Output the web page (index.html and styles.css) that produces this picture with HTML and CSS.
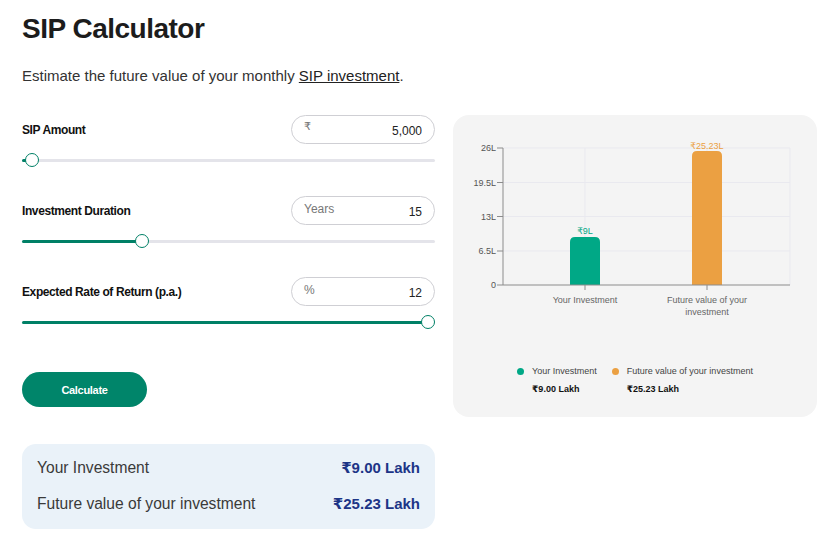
FILE: index.html
```html
<!DOCTYPE html>
<html lang="en">

<head>
    <meta charset="UTF-8">
    <meta name="viewport" content="width=device-width, initial-scale=1.0">
    <title>SIP Calculator</title>
    <link rel="stylesheet" href="styles.css">
</head>

<body>

    <h1 class="page-title">SIP Calculator</h1>
    <p class="page-intro">Estimate the future value of your monthly <a href="#">SIP investment</a>.</p>

    <div class="calc-layout">

        <!-- Inputs -->
        <div class="calc-form">
            <div class="field">
                <div class="field-head">
                    <label for="amount">SIP Amount</label>
                    <div class="input-box">
                        <span class="unit unit-rupee">₹</span>
                        <input type="text" id="amount" value="5,000" readonly>
                    </div>
                </div>
                <div class="slider">
                    <div class="slider-fill" style="width: 10px;"></div>
                    <div class="slider-thumb" style="left: 10px;"></div>
                </div>
            </div>

            <div class="field">
                <div class="field-head">
                    <label for="years">Investment Duration</label>
                    <div class="input-box">
                        <span class="unit">Years</span>
                        <input type="text" id="years" value="15" readonly>
                    </div>
                </div>
                <div class="slider">
                    <div class="slider-fill" style="width: 120px;"></div>
                    <div class="slider-thumb" style="left: 120px;"></div>
                </div>
            </div>

            <div class="field">
                <div class="field-head">
                    <label for="rate">Expected Rate of Return (p.a.)</label>
                    <div class="input-box">
                        <span class="unit">%</span>
                        <input type="text" id="rate" value="12" readonly>
                    </div>
                </div>
                <div class="slider">
                    <div class="slider-fill" style="width: 406px;"></div>
                    <div class="slider-thumb" style="left: 406px;"></div>
                </div>
            </div>

            <button type="button" class="btn-calc">Calculate</button>

            <div class="result-box">
                <div class="result-row">
                    <span>Your Investment</span>
                    <strong>₹9.00 Lakh</strong>
                </div>
                <div class="result-row">
                    <span>Future value of your investment</span>
                    <strong>₹25.23 Lakh</strong>
                </div>
            </div>
        </div>

        <!-- Chart -->
        <div class="chart-card">
            <svg class="chart" width="364" height="210" viewBox="0 0 364 210">
                <g class="grid">
                    <line x1="50" y1="33" x2="337" y2="33" />
                    <line x1="50" y1="67.5" x2="337" y2="67.5" />
                    <line x1="50" y1="101.5" x2="337" y2="101.5" />
                    <line x1="50" y1="136" x2="337" y2="136" />
                    <line x1="132" y1="33" x2="132" y2="170" />
                    <line x1="254" y1="33" x2="254" y2="170" />
                    <line x1="337" y1="33" x2="337" y2="170" />
                </g>

                <path class="bar-green" d="M117 170 V127 Q117 122 122 122 H142 Q147 122 147 127 V170 Z" />
                <path class="bar-orange" d="M239 170 V41 Q239 36 244 36 H264 Q269 36 269 41 V170 Z" />

                <text class="bar-label green" x="132" y="119">₹9L</text>
                <text class="bar-label orange" x="254" y="34">₹25.23L</text>

                <g class="axis">
                    <line x1="50" y1="33" x2="50" y2="170" />
                    <line x1="50" y1="170" x2="337" y2="170" />
                    <line x1="44" y1="33" x2="50" y2="33" />
                    <line x1="44" y1="67.5" x2="50" y2="67.5" />
                    <line x1="44" y1="101.5" x2="50" y2="101.5" />
                    <line x1="44" y1="136" x2="50" y2="136" />
                    <line x1="44" y1="170" x2="50" y2="170" />
                    <line x1="132" y1="170" x2="132" y2="175" />
                    <line x1="254" y1="170" x2="254" y2="175" />
                </g>

                <g class="tick-y">
                    <text x="43" y="36">26L</text>
                    <text x="43" y="70.5">19.5L</text>
                    <text x="43" y="104.5">13L</text>
                    <text x="43" y="139">6.5L</text>
                    <text x="43" y="173">0</text>
                </g>

                <g class="tick-x">
                    <text x="132" y="188">Your Investment</text>
                    <text x="254" y="188">Future value of your</text>
                    <text x="254" y="200">investment</text>
                </g>
            </svg>

            <div class="legend">
                <div class="legend-item">
                    <span class="dot dot-green"></span>
                    <span class="legend-name">Your Investment</span>
                    <span class="legend-value">₹9.00 Lakh</span>
                </div>
                <div class="legend-item">
                    <span class="dot dot-orange"></span>
                    <span class="legend-name">Future value of your investment</span>
                    <span class="legend-value">₹25.23 Lakh</span>
                </div>
            </div>
        </div>

    </div>

</body>

</html>
```

FILE: styles.css
```css
/* General Styles */
body {
    margin: 0;
    padding: 12px 9px 0 22px;
    background: #ffffff;
    font-family: "Liberation Sans", Arial, "DejaVu Sans", sans-serif;
    color: #222222;
}

.page-title {
    margin: 0;
    font-size: 28px;
    line-height: 34px;
    font-weight: 700;
    letter-spacing: -0.5px;
    color: #1c1c1c;
}

.page-intro {
    margin: 20px 0 0;
    font-size: 15px;
    line-height: 20px;
    color: #333333;
}

.page-intro a {
    color: #222222;
    text-decoration: underline;
}

/* Layout */
.calc-layout {
    display: flex;
    align-items: flex-start;
    gap: 18px;
    margin-top: 29px;
}

.calc-form {
    width: 413px;
    flex-shrink: 0;
}

/* Fields */
.field {
    margin-bottom: 29px;
}

.field-head {
    display: flex;
    justify-content: space-between;
    align-items: center;
    height: 29px;
}

.field-head label {
    font-size: 12px;
    font-weight: 700;
    letter-spacing: -0.4px;
    color: #111111;
}

.input-box {
    display: flex;
    align-items: center;
    width: 144px;
    height: 29px;
    box-sizing: border-box;
    padding: 0 12px 0 12px;
    border: 1px solid #cfcfd4;
    border-radius: 15px;
    background: #ffffff;
}

.unit {
    font-size: 12px;
    color: #777777;
    margin-top: -3px;
}

.unit-rupee {
    font-size: 11px;
    margin-top: -6px;
}

.input-box input {
    flex: 1;
    min-width: 0;
    border: none;
    outline: none;
    background: transparent;
    padding: 2px 0 0;
    text-align: right;
    font-family: inherit;
    font-size: 12px;
    color: #222222;
}

/* Sliders */
.slider {
    position: relative;
    height: 14px;
    margin-top: 9px;
}

.slider::before {
    content: "";
    position: absolute;
    left: 0;
    right: 0;
    top: 6px;
    height: 3px;
    border-radius: 2px;
    background: #e4e4ea;
}

.slider-fill {
    position: absolute;
    left: 0;
    top: 6px;
    height: 3px;
    border-radius: 2px;
    background: #008066;
}

.slider-thumb {
    position: absolute;
    top: 0;
    width: 14px;
    height: 14px;
    margin-left: -7px;
    box-sizing: border-box;
    border: 1.5px solid #008066;
    border-radius: 50%;
    background: #ffffff;
}

/* Button */
.btn-calc {
    display: block;
    width: 125px;
    height: 35px;
    margin-top: 43px;
    border: none;
    border-radius: 18px;
    background: #00856a;
    color: #ffffff;
    font-family: inherit;
    font-size: 11px;
    font-weight: 700;
    letter-spacing: -0.3px;
    cursor: pointer;
}

/* Results */
.result-box {
    margin-top: 37px;
    padding: 6px 15px 7px;
    border-radius: 14px;
    background: #eaf2f9;
}

.result-row {
    display: flex;
    justify-content: space-between;
    align-items: center;
    height: 36px;
    font-size: 15px;
}

.result-row span {
    font-size: 15.6px;
    color: #3a3a3a;
}

.result-row strong {
    color: #1d3587;
}

/* Chart Card */
.chart-card {
    width: 364px;
    height: 302px;
    flex-shrink: 0;
    border-radius: 16px;
    background: #f4f4f4;
}

.chart {
    display: block;
    font-family: "Liberation Sans", Arial, "DejaVu Sans", sans-serif;
}

.grid line {
    stroke: #e9e9ef;
    stroke-width: 1;
}

.axis line {
    stroke: #8c8c8c;
    stroke-width: 1;
}

.bar-green {
    fill: #00a886;
}

.bar-orange {
    fill: #eba042;
}

.bar-label {
    font-size: 9px;
    text-anchor: middle;
}

.bar-label.green {
    fill: #00a886;
}

.bar-label.orange {
    fill: #eba042;
}

.tick-y text {
    font-size: 9px;
    fill: #555555;
    text-anchor: end;
}

.tick-x text {
    font-size: 9px;
    fill: #666666;
    text-anchor: middle;
}

/* Legend */
.legend {
    display: flex;
    justify-content: center;
    gap: 15px;
    margin-top: 41px;
}

.legend-item {
    display: grid;
    grid-template-columns: 8px auto;
    column-gap: 7px;
    row-gap: 8px;
    align-items: center;
    font-size: 9px;
}

.dot {
    width: 7px;
    height: 7px;
    border-radius: 50%;
}

.dot-green {
    background: #00a886;
}

.dot-orange {
    background: #eba042;
}

.legend-name {
    color: #444444;
}

.legend-value {
    grid-column: 2;
    font-weight: 700;
    color: #111111;
}
```
